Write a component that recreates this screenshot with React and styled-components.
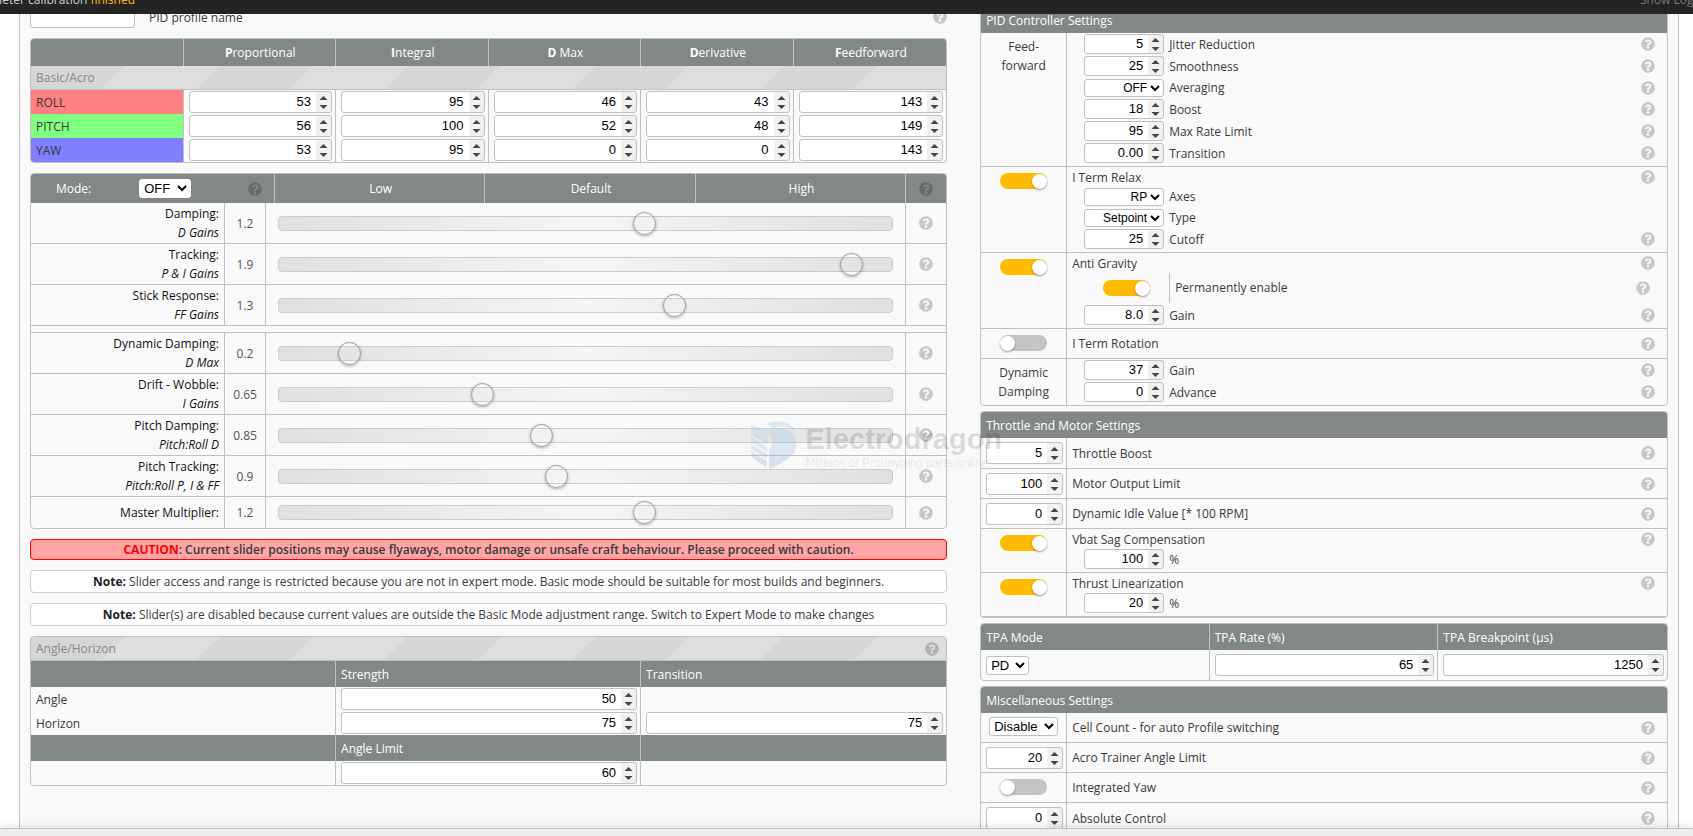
import React, { useId } from "react";
import styled, { createGlobalStyle, css } from "styled-components";
import { FaQuestionCircle } from "react-icons/fa";

const line = "#c0c0c0";
const bar = "#828885";

const GlobalStyle = createGlobalStyle`
  * { box-sizing: border-box; }
  body {
    margin: 0;
    background: #fff;
    color: #3a3a3a;
    font-family: "Open Sans", "Noto Sans", sans-serif;
    font-size: 12px;
    line-height: 19px;
  }
`;

const Page = styled.div`
  display: flex;
  flex-direction: column;
  height: 100vh;
  overflow: hidden;
`;

const StatusBar = styled.header`
  flex: none;
  display: flex;
  align-items: flex-end;
  justify-content: space-between;
  height: 14px;
  padding-bottom: 5px;
  overflow: hidden;
  background: #242424;
  color: #ccc;
`;

const LogLine = styled.div`
  display: flex;
  justify-content: flex-end;
  width: 135px;
  white-space: nowrap;
  overflow: hidden;
`;

const LogText = styled.p`
  flex: none;
  margin: 0;

  strong {
    color: #ffbb00;
    font-weight: 500;
  }
`;

const LogLink = styled.a`
  width: 53px;
  overflow: hidden;
  white-space: nowrap;
  color: #777;
  text-decoration: none;
`;

const Viewport = styled.main`
  position: relative;
  flex: 1;
  min-height: 0;
  overflow: hidden;
`;

const Panel = styled.div`
  display: grid;
  grid-template-columns: minmax(0, 4fr) minmax(0, 3fr);
  column-gap: 33px;
  align-items: start;
  min-height: 100%;
  margin: -14px 14px 0 19px;
  padding: 6px 10px 0;
  border: solid ${line};
  border-width: 0 1px;
  background: #f9f9f9;
`;

const Column = styled.div`
  display: flex;
  flex-direction: column;
  gap: ${(p) => p.$gap}px;
`;

const Footer = styled.footer`
  position: relative;
  flex: none;
  height: 8px;
  border-top: 1px solid ${line};
  background: #eee;
  box-shadow: 0 0 10px rgba(0, 0, 0, 0.16);
`;

const HelpIcon = styled(FaQuestionCircle)`
  flex: none;
  display: block;
  width: 14px;
  height: 14px;
  color: rgba(0, 0, 0, 0.2);
`;

const Help = (props) => <HelpIcon role="img" aria-label="Help" {...props} />;

const TextInput = styled.input`
  width: 105px;
  height: 22px;
  border: 1px solid ${line};
  border-radius: 3px;
  background: #fff;
`;

const NumberInput = styled.input.attrs({ type: "number" })`
  display: block;
  width: ${(p) => p.$width || "100%"};
  height: ${(p) => (p.$small ? 20 : 22)}px;
  margin: 0;
  padding: 0 0 2px;
  border: 1px solid ${line};
  border-radius: 3px;
  background: linear-gradient(#f1f1f1, #f1f1f1) right / 15px 100% no-repeat #fff;
  color: #000;
  font: 13px/18px "Liberation Sans", Arial, sans-serif;
  text-align: right;
  appearance: textfield;

  &::-webkit-inner-spin-button {
    appearance: none;
    width: 15px;
    height: 18px;
    margin: 0 0 0 5px;
    opacity: 1;
    background: url("data:image/svg+xml,%3Csvg xmlns='http://www.w3.org/2000/svg' width='15' height='18'%3E%3Cpath d='M3.500 8 7.500 4 11.500 8zM3.500 13 7.500 17 11.500 13z' fill='%23444'/%3E%3C/svg%3E")
      center no-repeat;
  }
`;

const Select = styled.select`
  width: ${(p) => p.$width}px;
  height: ${(p) => (p.$small ? 18 : 19)}px;
  margin: 0;
  padding: 0;
  border: 1px solid ${line};
  border-radius: 3px;
  background: #fff;
  color: #000;
  font: ${(p) => (p.$small ? 12 : 13)}px "Liberation Sans", Arial, sans-serif;
  text-align-last: ${(p) => (p.$small ? "right" : "left")};
`;

const Choice = ({ value, ...rest }) => (
  <Select defaultValue={value} {...rest}>
    <option>{value}</option>
  </Select>
);

const Toggle = styled.input.attrs({ type: "checkbox", role: "switch" })`
  appearance: none;
  flex: none;
  display: flex;
  align-items: center;
  width: 47px;
  height: 16px;
  margin: 0;
  border-radius: 8px;
  background: #c4c4c4;

  &::before {
    content: "";
    width: 15px;
    height: 15px;
    border-radius: 50%;
    background: #fff;
    box-shadow: 0 1px 2px rgba(0, 0, 0, 0.4);
  }

  &:checked {
    justify-content: flex-end;
    background: #ffbb00;
  }
`;

const ProfileRow = styled.div`
  display: flex;
  align-items: center;
  gap: 14px;

  & > svg {
    margin-left: auto;
  }
`;

const stripes = css`
  background: repeating-linear-gradient(135deg, #d6d6d6 0 66px, #dedede 66px 133px);
`;

const Table = styled.table`
  width: 100%;
  table-layout: fixed;
  border: 1px solid ${line};
  border-radius: 4px;
  border-collapse: separate;
  border-spacing: 0;
  overflow: hidden;

  th,
  td {
    height: 24px;
    padding: 0 3px 0 5px;
    font-weight: 400;
    text-align: left;
    vertical-align: middle;
  }

  th:not(:last-child),
  td:not(:last-child) {
    border-right: 1px solid ${line};
  }
`;

const HeadRow = styled.tr`
  && > * {
    height: ${(p) => p.$height || 26}px;
    background: ${bar};
    color: #fff;
    font-weight: 500;
    text-align: ${(p) => (p.$center ? "center" : "left")};
  }
`;

const GroupRow = styled.tr`
  ${stripes}

  && > th {
    height: ${(p) => p.$height}px;
    padding: 0 7px 0 5px;
    border-bottom: 1px solid ${line};
    color: #888;
  }
`;

const GroupTitle = styled.div`
  display: flex;
  align-items: center;
  justify-content: space-between;
`;

const AxisName = styled.th`
  && {
    background: ${(p) => p.$color};
  }
`;

const ModeCell = styled.div`
  display: flex;
  align-items: center;
  padding: 0 9px 0 20px;

  select {
    margin-left: 48px;
    border-color: #fff;
  }

  svg {
    margin-left: auto;
  }
`;

const SliderRow = styled.tr`
  && > * {
    height: ${(p) => p.$height || 41}px;
    padding: 0 5px;
    border-bottom: ${(p) => (p.$last ? 0 : 1)}px solid ${line};
  }
`;

const SliderName = styled.th`
  && {
    color: #111;
    text-align: right;
  }

  label,
  em {
    display: block;
  }
`;

const SliderValue = styled.td`
  && {
    padding: 0;
    color: #555;
    text-align: center;
  }
`;

const SliderCell = styled.td`
  && {
    padding: 0 12px;
  }
`;

const HelpCell = styled.td`
  && {
    padding: 0;
  }

  svg {
    margin: 0 auto;
  }
`;

const SpacerCell = styled.td`
  &&& {
    height: 7px;
    border-bottom: 1px solid ${line};
  }
`;

const Slider = styled.input.attrs({ type: "range", min: 0, max: 2, step: 0.05 })`
  appearance: none;
  display: block;
  width: 100%;
  height: 23px;
  margin: 0;
  background: transparent;

  &::-webkit-slider-runnable-track {
    height: 15px;
    border: 1px solid #ccc;
    border-radius: 4px;
    background: linear-gradient(90deg, #e0e0e0, #f5f5f5 50%, #e0e0e0);
  }

  &::-webkit-slider-thumb {
    appearance: none;
    width: 23px;
    height: 23px;
    margin-top: -5px;
    border: 1px solid #999;
    border-radius: 50%;
    background: transparent;
    box-shadow: 0 1px 3px rgba(0, 0, 0, 0.3);
  }
`;

const Notice = styled.p`
  margin: 0;
  padding: ${(p) => (p.$danger ? 0 : 1)}px 10px;
  border: 1px solid ${(p) => (p.$danger ? "#f00" : "#ccc")};
  border-radius: 4px;
  background: ${(p) => (p.$danger ? "#ffa5a5" : "#fff")};
  font-weight: ${(p) => (p.$danger ? 600 : 400)};
  text-align: center;

  strong {
    color: ${(p) => (p.$danger ? "#f00" : "#222")};
    font-weight: 700;
  }
`;

const Card = styled.section`
  border: 1px solid ${line};
  border-radius: 4px;
  overflow: hidden;
`;

const CardTitle = styled.h2`
  margin: 0;
  padding: 4px 5px 3px;
  background: ${bar};
  color: #fff;
  font-size: 12px;
  font-weight: 500;
  line-height: 19px;
`;

const Setting = styled.div`
  display: grid;
  grid-template-columns: 86px minmax(0, 1fr);
  min-height: ${(p) => (p.$tall ? 31 : 30)}px;
  border-bottom: 1px solid ${line};

  &:last-child {
    border-bottom-width: ${(p) => (p.$underline ? 1 : 0)}px;
  }
`;

const Lead = styled.div`
  display: flex;
  align-items: flex-start;
  justify-content: center;
  padding: ${(p) => p.$top || 4}px ${(p) => (p.$inset ? "3px 0 5px" : "0 0")};
  border-right: 1px solid ${line};
  text-align: center;
`;

const Body = styled.div`
  padding-bottom: ${(p) => (p.$single ? 0 : 2)}px;
  align-self: ${(p) => (p.$single ? "center" : "start")};
`;

const Title = styled.div`
  display: flex;
  align-items: center;
  justify-content: space-between;
  padding: ${(p) => (p.$single ? 0 : 1)}px 12px 0 5px;
  height: 19px;
`;

const Field = styled.div`
  display: flex;
  align-items: center;
  gap: 5px;
  height: ${(p) => (p.$select ? 21 : 22)}px;
  padding: 0 12px 0 17px;

  svg {
    margin-left: auto;
  }
`;

const SwitchField = styled.div`
  display: flex;
  align-items: center;
  height: 32px;
  padding: 0 17px 0 36px;

  label {
    margin-left: 19px;
    padding-left: 5px;
    border-left: 1px solid ${line};
    line-height: 30px;
  }

  svg {
    margin-left: auto;
  }
`;

const Watermark = styled.div`
  position: absolute;
  top: 407px;
  left: calc(50% - 96px);
  display: flex;
  gap: 9px;
  color: rgba(0, 0, 0, 0.12);
  font-family: "Liberation Sans", Arial, sans-serif;
  white-space: nowrap;
  pointer-events: none;
`;

const WatermarkName = styled.div`
  font-size: 29px;
  font-weight: 700;
  line-height: 36px;
`;

const WatermarkLine = styled.div`
  font-size: 12px;
  line-height: 12px;
  color: rgba(0, 0, 0, 0.09);
`;

const NumberField = ({ name, value, help = true }) => {
  const id = useId();
  return (
    <Field>
      <NumberInput id={id} $small $width="80px" defaultValue={value} step="any" />
      <label htmlFor={id}>{name}</label>
      {help && <Help />}
    </Field>
  );
};

const SelectField = ({ name, value, help }) => {
  const id = useId();
  return (
    <Field $select>
      <Choice id={id} $small $width={80} value={value} />
      <label htmlFor={id}>{name}</label>
      {help && <Help />}
    </Field>
  );
};

const SwitchSetting = ({ name, on, children, underline }) => {
  const id = useId();
  return (
    <Setting $underline={underline}>
      <Lead $top={6}>
        <Toggle id={id} defaultChecked={on} />
      </Lead>
      <Body $single={!children}>
        <Title $single={!children}>
          <label htmlFor={id}>{name}</label>
          <Help />
        </Title>
        {children}
      </Body>
    </Setting>
  );
};

const ValueSetting = ({ name, value, select, tall }) => {
  const id = useId();
  return (
    <Setting $tall={tall}>
      <Lead $inset={!select}>
        {select ? (
          <Choice id={id} $width={69} value={value} />
        ) : (
          <NumberInput id={id} defaultValue={value} />
        )}
      </Lead>
      <Body $single>
        <Title $single>
          <label htmlFor={id}>{name}</label>
          <Help />
        </Title>
      </Body>
    </Setting>
  );
};

const gains = [
  ["P", "roportional"],
  ["I", "ntegral"],
  ["D", " Max"],
  ["D", "erivative"],
  ["F", "eedforward"],
];

const axes = [
  { name: "ROLL", color: "#ff8080", values: [53, 95, 46, 43, 143] },
  { name: "PITCH", color: "#80ff80", values: [56, 100, 52, 48, 149] },
  { name: "YAW", color: "#8080ff", values: [53, 95, 0, 0, 143] },
];

const mainSliders = [
  { name: "Damping:", detail: "D Gains", value: 1.2 },
  { name: "Tracking:", detail: "P & I Gains", value: 1.9 },
  { name: "Stick Response:", detail: "FF Gains", value: 1.3 },
];

const extraSliders = [
  { name: "Dynamic Damping:", detail: "D Max", value: 0.2 },
  { name: "Drift - Wobble:", detail: "I Gains", value: 0.65 },
  { name: "Pitch Damping:", detail: "Pitch:Roll D", value: 0.85 },
  { name: "Pitch Tracking:", detail: "Pitch:Roll P, I & FF", value: 0.9 },
  { name: "Master Multiplier:", value: 1.2, height: 31, last: true },
];

const SliderLine = ({ name, detail, value, height, last }) => {
  const id = useId();
  return (
    <SliderRow $height={height} $last={last}>
      <SliderName scope="row">
        <label htmlFor={id}>{name}</label>
        {detail && <em>{detail}</em>}
      </SliderName>
      <SliderValue>{value}</SliderValue>
      <SliderCell colSpan={4}>
        <Slider id={id} defaultValue={value} />
      </SliderCell>
      <HelpCell>
        <Help />
      </HelpCell>
    </SliderRow>
  );
};

const GainTable = () => (
  <Table>
    <thead>
      <HeadRow $center $height={27}>
        <td />
        {gains.map(([initial, rest]) => (
          <th key={initial + rest} scope="col">
            <b>{initial}</b>
            {rest}
          </th>
        ))}
      </HeadRow>
    </thead>
    <tbody>
      <GroupRow $height={24}>
        <th colSpan={6}>Basic/Acro</th>
      </GroupRow>
      {axes.map((axis) => (
        <tr key={axis.name}>
          <AxisName scope="row" $color={axis.color}>
            {axis.name}
          </AxisName>
          {axis.values.map((v, i) => (
            <td key={i}>
              <NumberInput aria-label={`${axis.name} ${gains[i].join("")}`} defaultValue={v} />
            </td>
          ))}
        </tr>
      ))}
    </tbody>
  </Table>
);

const SliderTable = () => (
  <Table>
    <colgroup>
      <col style={{ width: 194 }} />
      <col style={{ width: 41 }} />
      <col style={{ width: 9 }} />
      <col />
      <col />
      <col />
      <col style={{ width: 40 }} />
    </colgroup>
    <thead>
      <HeadRow $center $height={29}>
        <th colSpan={3}>
          <ModeCell>
            <label htmlFor="slider-mode">Mode:</label>
            <Choice id="slider-mode" $width={52} value="OFF" />
            <Help />
          </ModeCell>
        </th>
        <th scope="col">Low</th>
        <th scope="col">Default</th>
        <th scope="col">High</th>
        <HelpCell>
          <Help />
        </HelpCell>
      </HeadRow>
    </thead>
    <tbody>
      {mainSliders.map((s) => (
        <SliderLine key={s.name} {...s} />
      ))}
      <tr>
        <SpacerCell colSpan={7} />
      </tr>
      {extraSliders.map((s) => (
        <SliderLine key={s.name} {...s} />
      ))}
    </tbody>
  </Table>
);

const AngleTable = () => (
  <Table>
    <thead>
      <GroupRow $height={24}>
        <th colSpan={3}>
          <GroupTitle>
            Angle/Horizon
            <Help />
          </GroupTitle>
        </th>
      </GroupRow>
      <HeadRow>
        <td />
        <th scope="col">Strength</th>
        <th scope="col">Transition</th>
      </HeadRow>
    </thead>
    <tbody>
      <tr>
        <th scope="row">Angle</th>
        <td>
          <NumberInput aria-label="Angle strength" defaultValue={50} />
        </td>
        <td />
      </tr>
      <tr>
        <th scope="row">Horizon</th>
        <td>
          <NumberInput aria-label="Horizon strength" defaultValue={75} />
        </td>
        <td>
          <NumberInput aria-label="Horizon transition" defaultValue={75} />
        </td>
      </tr>
      <HeadRow>
        <td />
        <th scope="col">Angle Limit</th>
        <td />
      </HeadRow>
      <tr>
        <td />
        <td>
          <NumberInput aria-label="Angle limit" defaultValue={60} />
        </td>
        <td />
      </tr>
    </tbody>
  </Table>
);

const TpaRow = styled.tr`
  && > td {
    height: 30px;
  }

  select {
    display: block;
  }
`;

const TpaTable = () => (
  <Table>
    <thead>
      <HeadRow>
        <th scope="col">TPA Mode</th>
        <th scope="col">TPA Rate (%)</th>
        <th scope="col">TPA Breakpoint (μs)</th>
      </HeadRow>
    </thead>
    <tbody>
      <TpaRow>
        <td>
          <Choice aria-label="TPA mode" $width={43} value="PD" />
        </td>
        <td>
          <NumberInput aria-label="TPA rate" defaultValue={65} />
        </td>
        <td>
          <NumberInput aria-label="TPA breakpoint" defaultValue={1250} />
        </td>
      </TpaRow>
    </tbody>
  </Table>
);

const WatermarkLogo = () => (
  <svg width="46" height="48" viewBox="0 0 46 48" aria-hidden="true">
    <defs>
      <linearGradient id="wm" x1="0" y1="0" x2="0" y2="1">
        <stop offset="0" stopColor="#9fd4ec" />
        <stop offset="1" stopColor="#97a4d4" />
      </linearGradient>
    </defs>
    <g fill="url(#wm)" opacity="0.3">
      <path d="M16 3C28-3 41 1 45 11 37 5 30 4 22 7Z" />
      <path d="M0 4 15 9 22 8C34 4 45 12 45 24 45 36 30 43 18 48V28C22 24 23 19 17 14L16 23 0 14Z" />
      <path d="M0 16 16 26V31L0 21ZM0 23 16 33V38L0 28ZM0 30 16 40V47L0 36Z" />
    </g>
  </svg>
);

export default function App() {
  return (
    <>
      <GlobalStyle />
      <Page>
        <StatusBar>
          <LogLine>
            <LogText>
              Accelerometer calibration <strong>finished</strong>
            </LogText>
          </LogLine>
          <LogLink href="#log">Show Log</LogLink>
        </StatusBar>
        <Viewport>
          <Panel>
            <Column $gap={10}>
              <ProfileRow>
                <TextInput id="profile-name" type="text" />
                <label htmlFor="profile-name">PID profile name</label>
                <Help />
              </ProfileRow>
              <GainTable />
              <SliderTable />
              <Notice $danger>
                <strong>CAUTION</strong>: Current slider positions may cause flyaways, motor damage
                or unsafe craft behaviour. Please proceed with caution.
              </Notice>
              <Notice>
                <strong>Note:</strong> Slider access and range is restricted because you are not in
                expert mode. Basic mode should be suitable for most builds and beginners.
              </Notice>
              <Notice>
                <strong>Note:</strong> Slider(s) are disabled because current values are outside the
                Basic Mode adjustment range. Switch to Expert Mode to make changes
              </Notice>
              <AngleTable />
            </Column>
            <Column $gap={5}>
              <Card>
                <CardTitle>PID Controller Settings</CardTitle>
                <Setting>
                  <Lead>
                    Feed-
                    <br />
                    forward
                  </Lead>
                  <Body>
                    <NumberField name="Jitter Reduction" value="5" />
                    <NumberField name="Smoothness" value="25" />
                    <SelectField name="Averaging" value="OFF" help />
                    <NumberField name="Boost" value="18" />
                    <NumberField name="Max Rate Limit" value="95" />
                    <NumberField name="Transition" value="0.00" />
                  </Body>
                </Setting>
                <SwitchSetting name="I Term Relax" on>
                  <SelectField name="Axes" value="RP" />
                  <SelectField name="Type" value="Setpoint" />
                  <NumberField name="Cutoff" value="25" />
                </SwitchSetting>
                <SwitchSetting name="Anti Gravity" on>
                  <SwitchField>
                    <Toggle id="permanent" defaultChecked />
                    <label htmlFor="permanent">Permanently enable</label>
                    <Help />
                  </SwitchField>
                  <NumberField name="Gain" value="8.0" />
                </SwitchSetting>
                <SwitchSetting name="I Term Rotation" />
                <Setting>
                  <Lead>
                    Dynamic
                    <br />
                    Damping
                  </Lead>
                  <Body>
                    <NumberField name="Gain" value="37" />
                    <NumberField name="Advance" value="0" />
                  </Body>
                </Setting>
              </Card>
              <Card>
                <CardTitle>Throttle and Motor Settings</CardTitle>
                <ValueSetting name="Throttle Boost" value="5" tall />
                <ValueSetting name="Motor Output Limit" value="100" />
                <ValueSetting name="Dynamic Idle Value [* 100 RPM]" value="0" />
                <SwitchSetting name="Vbat Sag Compensation" on>
                  <NumberField name="%" value="100" help={false} />
                </SwitchSetting>
                <SwitchSetting name="Thrust Linearization" on underline>
                  <NumberField name="%" value="20" help={false} />
                </SwitchSetting>
              </Card>
              <TpaTable />
              <Card>
                <CardTitle>Miscellaneous Settings</CardTitle>
                <ValueSetting name="Cell Count - for auto Profile switching" value="Disable" select />
                <ValueSetting name="Acro Trainer Angle Limit" value="20" />
                <SwitchSetting name="Integrated Yaw" />
                <ValueSetting name="Absolute Control" value="0" />
              </Card>
            </Column>
          </Panel>
          <Watermark>
            <WatermarkLogo />
            <div>
              <WatermarkName>Electrodragon</WatermarkName>
              <WatermarkLine>Millions of Prototyping parts online!</WatermarkLine>
            </div>
          </Watermark>
        </Viewport>
        <Footer />
      </Page>
    </>
  );
}
